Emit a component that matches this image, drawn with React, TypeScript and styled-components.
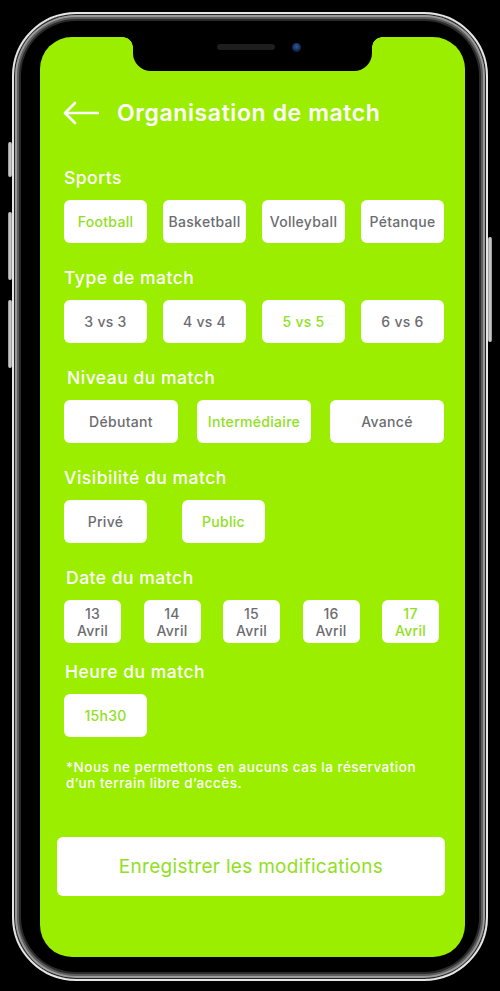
import React from "react";
import styled, { createGlobalStyle } from "styled-components";

const Global = createGlobalStyle`
  html, body { margin: 0; padding: 0; background: #000; }
  body { font-family: Inter, "Open Sans", sans-serif; }
  * { box-sizing: border-box; }
`;

const Stage = styled.div`
  width: 500px;
  height: 991px;
  background: #000;
  padding: 12px 12px 10px 12px;
  display: flex;
`;

const Phone = styled.div`
  position: relative;
  flex: 1;
  border-radius: 64px;
  border: 2px solid #e6e6e6;
  background: #000;
  box-shadow: inset 0 0 0 1px #222, inset 0 0 0 3px #9a9a9a, inset 0 0 0 5px #5c5c5c,
    inset 0 0 0 7px #2a2a2a;
  padding: 23px 21px 22px 26px;
  display: flex;
`;

const SideButton = styled.div<{ $side: "left" | "right"; $top: number; $h: number }>`
  position: absolute;
  ${(p) => (p.$side === "left" ? "left: -6px;" : "right: -6px;")}
  top: ${(p) => p.$top}px;
  height: ${(p) => p.$h}px;
  width: 4px;
  border-radius: 2px;
  background: linear-gradient(90deg, #8a8a8a, #d9d9d9, #8a8a8a);
`;

const Screen = styled.div`
  position: relative;
  flex: 1;
  background: #9bee00;
  border-radius: 32px;
  padding: 56px 21px 61px 24px;
  display: flex;
  flex-direction: column;
  overflow: hidden;
`;

const Notch = styled.div`
  position: absolute;
  top: 0;
  left: 93px;
  width: 239px;
  height: 34px;
  background: #000;
  border-radius: 0 0 18px 18px;
  display: flex;
  align-items: flex-start;
  justify-content: center;
  padding-top: 7px;
  gap: 17px;
  &::before, &::after {
    content: "";
    position: absolute;
    top: 0;
    width: 10px;
    height: 10px;
  }
  &::before {
    left: -10px;
    background: radial-gradient(circle at 0 100%, transparent 9.5px, #000 10px);
  }
  &::after {
    right: -10px;
    background: radial-gradient(circle at 100% 100%, transparent 9.5px, #000 10px);
  }
`;

const Speaker = styled.div`
  width: 58px;
  height: 6px;
  border-radius: 3px;
  margin-left: 12px;
  background: #1e1e1e;
`;

const Camera = styled.div`
  width: 9px;
  height: 9px;
  margin-top: -1px;
  border-radius: 50%;
  background: radial-gradient(circle at 50% 40%, #2d5aa8, #0f1f3d 70%);
`;

const Header = styled.div`
  height: 40px;
  display: flex;
  align-items: center;
  gap: 18px;
  margin-left: -1px;
  margin-bottom: 34px;
`;

const Title = styled.h1`
  margin: 0;
  color: #fff;
  font-family: Inter, sans-serif;
  font-weight: 600;
  font-size: 23px;
  letter-spacing: 0.6px;
`;

const Sections = styled.div`
  display: flex;
  flex-direction: column;
  gap: 24px;
`;

const Section = styled.section<{ $pull?: number }>`
  display: flex;
  flex-direction: column;
  gap: 11px;
  margin-top: ${(p) => p.$pull ?? 0}px;
`;

const Label = styled.h2<{ $indent?: number }>`
  margin: 0 0 0 ${(p) => p.$indent ?? 0}px;
  height: 22px;
  line-height: 22px;
  color: #fff;
  font-family: Inter, sans-serif;
  font-weight: 500;
  font-size: 17.5px;
  letter-spacing: 0.5px;
`;

const Row = styled.div<{ $cols: string; $gap: number }>`
  display: grid;
  grid-template-columns: ${(p) => p.$cols};
  column-gap: ${(p) => p.$gap}px;
`;

const Chip = styled.button<{ $active?: boolean }>`
  height: 43px;
  border: none;
  border-radius: 6px;
  background: #fff;
  color: ${(p) => (p.$active ? "#8fe01e" : "#6c6c70")};
  font-family: Inter, sans-serif;
  font-weight: 500;
  font-size: 14px;
  letter-spacing: 0.3px;
  line-height: 17px;
  padding: 0;
  display: flex;
  flex-direction: column;
  align-items: center;
  justify-content: center;
  white-space: nowrap;
`;

const Note = styled.p`
  margin: 22px 0 0 2px;
  color: #fff;
  font-family: Inter, sans-serif;
  font-weight: 500;
  font-size: 13.5px;
  letter-spacing: 0.5px;
  line-height: 16px;
  white-space: nowrap;
`;

const SaveButton = styled.button`
  margin: auto -1px 0 -7px;
  height: 59px;
  border: none;
  border-radius: 6px;
  background: #fff;
  color: #8fe01e;
  font-family: Inter, sans-serif;
  font-weight: 400;
  font-size: 19px;
  letter-spacing: 0.3px;
`;

const BackArrow = () => (
  <svg width="36" height="24" viewBox="0 0 36 24" fill="none">
    <path d="M35 12H2M12 2L2 12l10 10" stroke="#fff" strokeWidth="2.6" strokeLinecap="round" strokeLinejoin="round" />
  </svg>
);

const sports = ["Football", "Basketball", "Volleyball", "Pétanque"];
const types = ["3 vs 3", "4 vs 4", "5 vs 5", "6 vs 6"];
const levels = ["Débutant", "Intermédiaire", "Avancé"];
const dates = ["13", "14", "15", "16", "17"];

export default function App() {
  return (
    <>
      <Global />
      <Stage>
        <Phone>
          <SideButton $side="left" $top={128} $h={35} />
          <SideButton $side="left" $top={198} $h={68} />
          <SideButton $side="left" $top={286} $h={68} />
          <SideButton $side="right" $top={223} $h={105} />
          <Screen>
            <Notch>
              <Speaker />
              <Camera />
            </Notch>
            <Header>
              <BackArrow />
              <Title>Organisation de match</Title>
            </Header>
            <Sections>
              <Section>
                <Label>Sports</Label>
                <Row $cols="repeat(4, 83px)" $gap={16}>
                  {sports.map((s, i) => (
                    <Chip key={s} $active={i === 0}>{s}</Chip>
                  ))}
                </Row>
              </Section>
              <Section>
                <Label>Type de match</Label>
                <Row $cols="repeat(4, 83px)" $gap={16}>
                  {types.map((s, i) => (
                    <Chip key={s} $active={i === 2}>{s}</Chip>
                  ))}
                </Row>
              </Section>
              <Section>
                <Label $indent={3}>Niveau du match</Label>
                <Row $cols="repeat(3, 114px)" $gap={19}>
                  {levels.map((s, i) => (
                    <Chip key={s} $active={i === 1}>{s}</Chip>
                  ))}
                </Row>
              </Section>
              <Section>
                <Label>Visibilité du match</Label>
                <Row $cols="repeat(2, 83px)" $gap={35}>
                  <Chip>Privé</Chip>
                  <Chip $active>Public</Chip>
                </Row>
              </Section>
              <Section>
                <Label $indent={2}>Date du match</Label>
                <Row $cols="repeat(5, 57px)" $gap={22.5}>
                  {dates.map((d, i) => (
                    <Chip key={d} $active={i === 4}>
                      <span>{d}</span>
                      <span>Avril</span>
                    </Chip>
                  ))}
                </Row>
              </Section>
              <Section $pull={-6}>
                <Label $indent={1}>Heure du match</Label>
                <Row $cols="83px" $gap={0}>
                  <Chip $active>15h30</Chip>
                </Row>
              </Section>
            </Sections>
            <Note>
              *Nous ne permettons en aucuns cas la réservation
              <br />
              d’un terrain libre d’accès.
            </Note>
            <SaveButton>Enregistrer les modifications</SaveButton>
          </Screen>
        </Phone>
      </Stage>
    </>
  );
}
